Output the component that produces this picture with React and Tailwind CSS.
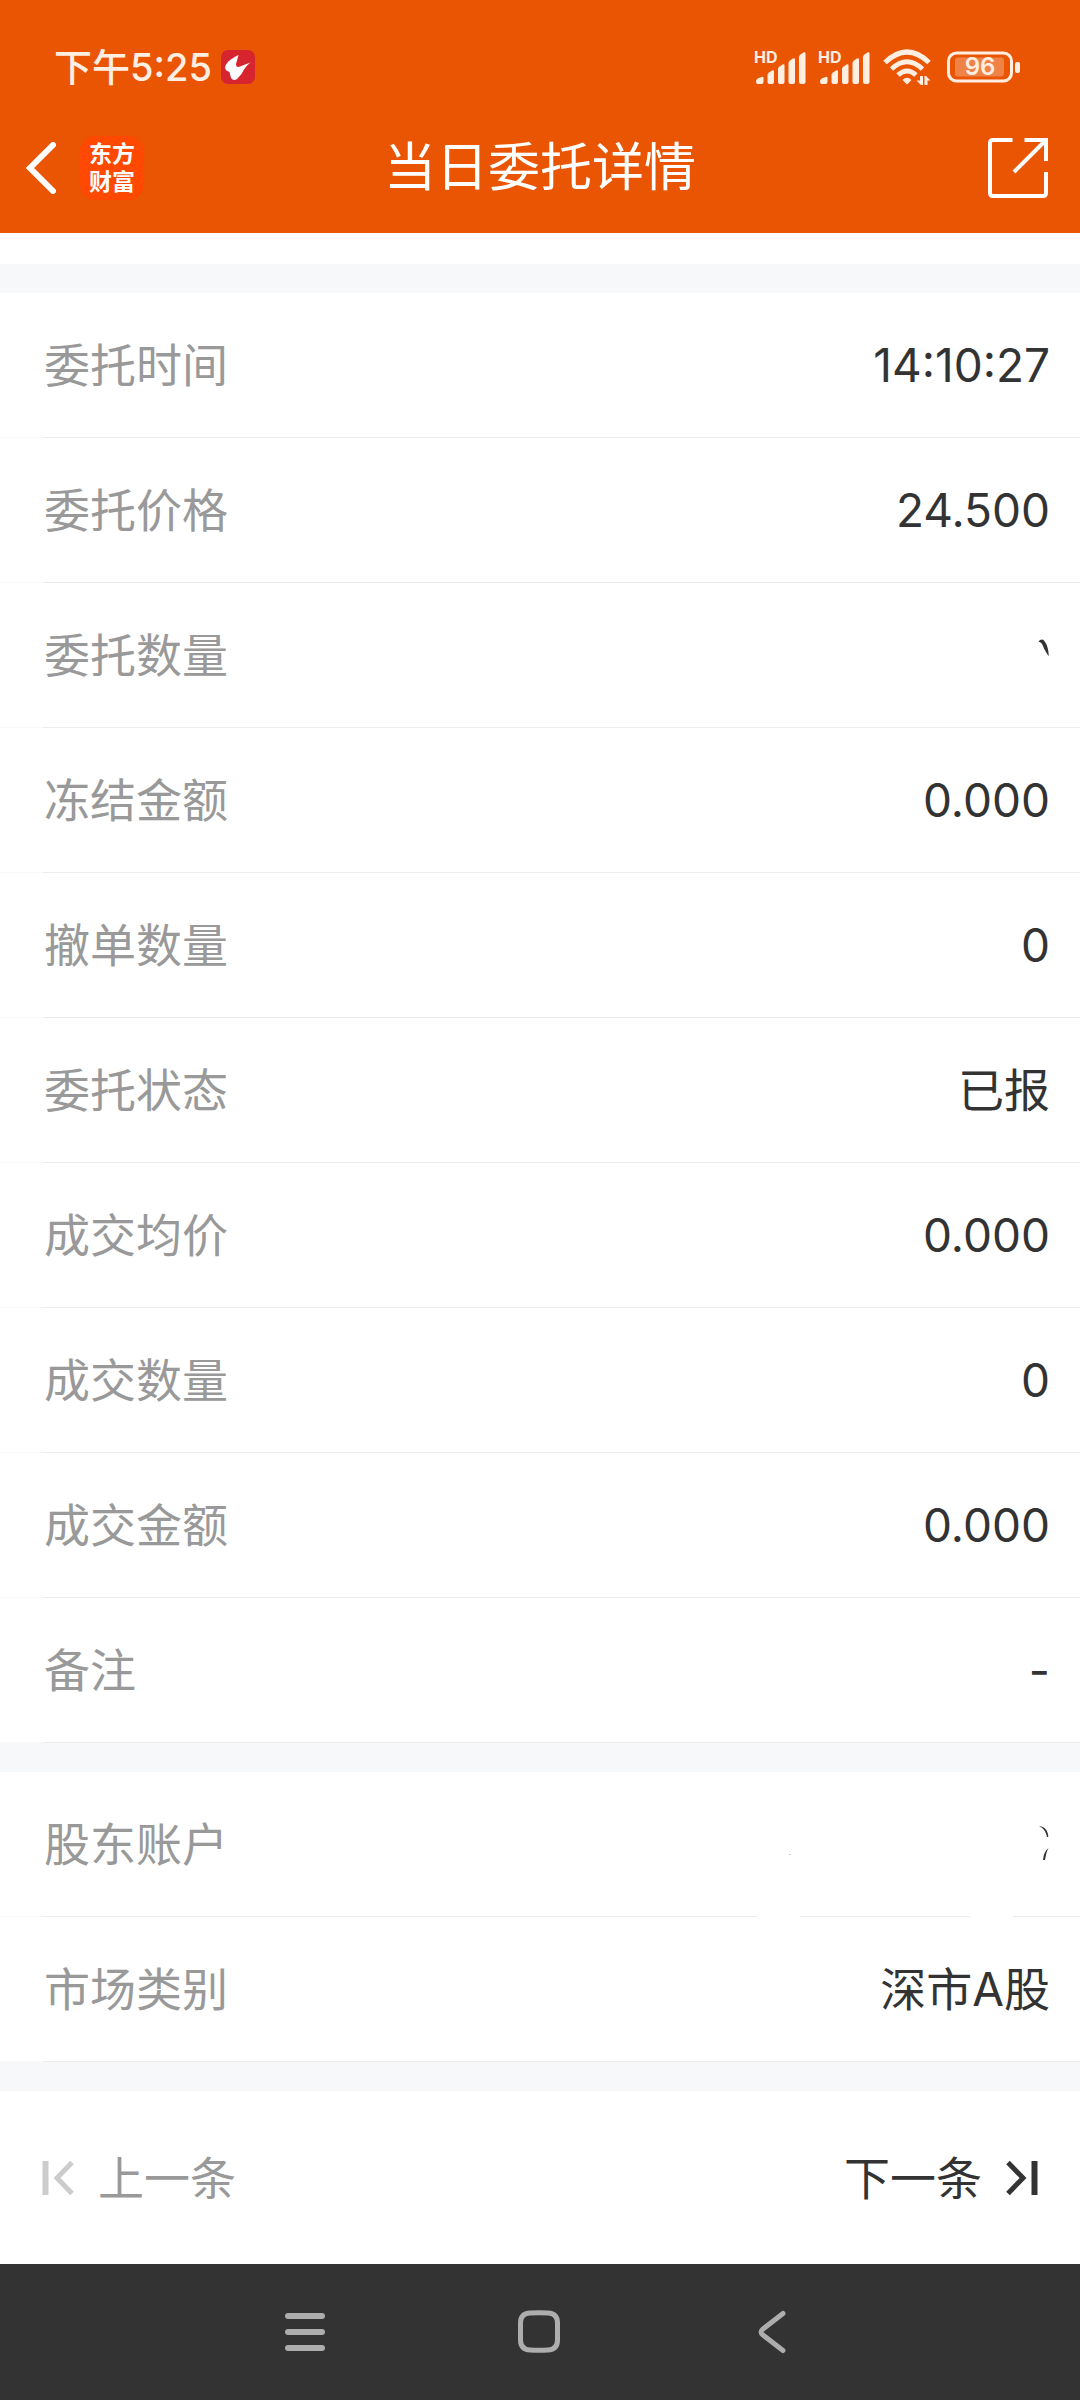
import clsx from 'clsx';

const orderRows = [
    { label: '委托时间', value: '14:10:27' },
    { label: '委托价格', value: '24.500' },
    { label: '委托数量', value: <MaskedAmount /> },
    { label: '冻结金额', value: '0.000' },
    { label: '撤单数量', value: '0' },
    { label: '委托状态', value: '已报' },
    { label: '成交均价', value: '0.000' },
    { label: '成交数量', value: '0' },
    { label: '成交金额', value: '0.000' },
    { label: '备注', value: '-' },
];

const accountRows = [
    { label: '股东账户', value: <MaskedAccount />, brokenLine: true },
    { label: '市场类别', value: '深市A股' },
];

// What is left of the value after it has been wiped out
function MaskedAmount() {
    return (
        <svg className="w-4 h-12" viewBox="0 0 16 48" fill="#333">
            <path d="M4.500 10.500L6 9Q8.500 7.800 10 9.500Q14.500 15 14.800 25Q13.500 24 10 17.500Q8 12 6.500 11.500Z" />
        </svg>
    );
}

function MaskedAccount() {
    return (
        <svg className="w-[264px] h-12" viewBox="0 0 264 48" fill="#333">
            <path d="M3 34h2v1h-2z" fill="#ccc" />
            <path d="M253 6C258 6.500 262.300 10 262.300 17H261C260 11.500 257 7.800 253 6Z" />
            <path d="M262.500 28C260.500 31 260 35 259 40H257C257.500 35 259 30.500 262.500 28Z" />
        </svg>
    );
}

function Divider({ broken }) {
    return (
        <div className="flex h-px">
            <div className="w-[43px] bg-[#f9f9f9]" />
            <div className="flex-1 bg-[#ececec]" />
            {broken && (
                <>
                    <div className="w-[43px]" />
                    <div className="w-[170px] bg-[#ececec]" />
                    <div className="w-[43px]" />
                    <div className="w-[67px] bg-[#ececec]" />
                </>
            )}
        </div>
    );
}

function DetailList({ rows }) {
    return (
        <dl className="bg-white">
            {rows.map((row) => (
                <div key={row.label}>
                    <div className="flex h-36 items-center justify-between pl-11 pr-[30px]">
                        <dt className="text-[#999]">{row.label}</dt>
                        <dd className="text-[#333]">{row.value}</dd>
                    </div>
                    <Divider broken={row.brokenLine} />
                </div>
            ))}
        </dl>
    );
}

const Band = () => <div className="h-[29px] bg-[#f6f8fa]" />;

function Signal() {
    return (
        <div className="relative h-9 w-[52px]">
            <span className="absolute left-0 top-0 text-base leading-4 font-bold">HD</span>
            <svg className="h-9 w-[52px]" viewBox="0 0 52 36" fill="currentColor">
                <path d="M2 32.500Q2 30 5 29L7.500 28Q9.500 27 9.500 29V33Q9.500 35 7.500 35H4Q2 35 2 32.500Z" />
                <path d="M13.500 26Q13.500 24.500 15 23.500L18 21.500Q20 20.500 20 22.500V33Q20 35 18 35H15.500Q13.500 35 13.500 33Z" />
                <path d="M24 20Q24 18.500 25.500 17.500L28.500 15.500Q30.500 14.500 30.500 16.500V33Q30.500 35 28.500 35H26Q24 35 24 33Z" />
                <path d="M34.500 14Q34.500 12.500 36 11.500L39 9.500Q41 8.500 41 10.500V33Q41 35 39 35H36.500Q34.500 35 34.500 33Z" />
                <path d="M45 8Q45 6.500 46.500 5.500L49.500 3.500Q51.500 2.500 51.500 4.500V33Q51.500 35 49.500 35H47Q45 35 45 33Z" />
            </svg>
        </div>
    );
}

function Wifi() {
    return (
        <svg className="h-9 w-[52px]" viewBox="0 0 52 36" fill="none" stroke="currentColor" strokeWidth="5">
            <path d="M3 13.500Q25 -7.500 47 13.500" />
            <path d="M9.500 20Q25 5.500 40.500 20" />
            <path d="M16 26Q25 18 34 26" />
            <path d="M20.500 31Q25 26.500 29.500 31L25 35.500Z" fill="currentColor" stroke="none" />
            <path d="M38 27H41V36H39L34.500 31.500H38ZM42.500 37V27H44L48.500 31.500H45.500V37Z" fill="currentColor" stroke="none" />
        </svg>
    );
}

function Battery() {
    return (
        <div className="relative h-8 w-[74px]">
            <svg className="h-8 w-[74px]" viewBox="0 0 74 32" fill="none">
                <rect x="2.500" y="2" width="63" height="28" rx="8" stroke="currentColor" strokeWidth="3" />
                <rect x="9" y="6.500" width="49" height="19" rx="3" fill="#fff" fillOpacity="0.270" />
                <rect x="69" y="11" width="5" height="11" rx="2" fill="currentColor" />
            </svg>
            <span className="absolute inset-y-0 left-0 w-[68px] text-center text-2xl leading-8 font-semibold">96</span>
        </div>
    );
}

function StatusBar() {
    return (
        <div className="flex h-[103px] items-center justify-between pt-[30px] pl-[54px] pr-[60px] text-[#ffeee2]">
            <div className="flex items-center gap-2">
                <span className="text-[38px] leading-[48px] font-medium">下午5:25</span>
                <svg className="size-9" viewBox="0 0 36 36">
                    <rect x="1" y="1" width="34" height="34" rx="7" fill="#d7252f" />
                    <path d="M18.500 6L16 15Q16 19 20 17.500L30.500 13.500Q25 17.500 21.500 25L17 30Q13.500 32.500 11 29L9.500 23Q3 21 6 15.500Q9 10.500 18.500 6Z" fill="#fff" />
                </svg>
            </div>
            <div className="flex items-center gap-3">
                <Signal />
                <Signal />
                <Wifi />
                <Battery />
            </div>
        </div>
    );
}

function TitleBar() {
    return (
        <div className="grid h-[130px] grid-cols-[1fr_auto_1fr] items-center text-white">
            <div className="flex items-center gap-6 pl-6">
                <button type="button" aria-label="返回">
                    <svg className="h-[52px] w-8" viewBox="0 0 32 52" fill="none" stroke="currentColor" strokeWidth="6" strokeLinecap="round">
                        <path d="M29 3L6 26L29 49" />
                    </svg>
                </button>
                <div className="size-16 rounded-2xl bg-[#ff4800] pt-1 text-center text-[23px] leading-7 font-bold">
                    <div>东方</div>
                    <div>财富</div>
                </div>
            </div>
            <h1 className="text-[52px] leading-16">当日委托详情</h1>
            <div className="flex justify-end pr-8">
                <button type="button" aria-label="分享">
                    <svg className="size-[60px]" viewBox="0 0 60 60" fill="none" stroke="currentColor" strokeWidth="4">
                        <path d="M24.500 2H5Q2 2 2 5V55Q2 58 5 58H55Q58 58 58 55V34" />
                        <path d="M36.500 2H58V23" />
                        <path d="M57 3L26 34" />
                    </svg>
                </button>
            </div>
        </div>
    );
}

function StepIcon({ flip, className }) {
    return (
        <svg className={clsx('h-9 w-9', flip && 'rotate-180', className)} viewBox="0 0 36 36" fill="none" stroke="currentColor" strokeWidth="5">
            <path d="M5.500 1V35" strokeWidth="6" />
            <path d="M32 2.500L17 18L32 33.500" />
        </svg>
    );
}

const App = () => {
    return (
        <div className="min-h-screen bg-white font-[Inter,'Noto_Sans_CJK_SC',sans-serif] text-[46px] leading-16">
            <header className="bg-[#ea5504]">
                <StatusBar />
                <TitleBar />
            </header>

            <main className="pt-[31px]">
                <Band />
                <DetailList rows={orderRows} />
                <Band />
                <DetailList rows={accountRows} />
                <Band />
                <div className="flex h-[173px] items-center justify-between px-10">
                    <button type="button" className="flex items-center gap-[22px] text-[#999]">
                        <StepIcon className="text-[#ccc]" />
                        上一条
                    </button>
                    <button type="button" className="flex items-center gap-[22px] text-[#333]">
                        下一条
                        <StepIcon flip />
                    </button>
                </div>
            </main>

            <nav className="flex h-[136px] items-center justify-center bg-[#333] text-[#adadad]">
                <button type="button" aria-label="菜单" className="flex w-[234px] justify-center">
                    <svg className="size-11" viewBox="0 0 44 44" stroke="currentColor" strokeWidth="6" strokeLinecap="round">
                        <path d="M4 6H38M4 22H38M4 38H38" />
                    </svg>
                </button>
                <button type="button" aria-label="主页" className="flex w-[234px] justify-center">
                    <svg className="size-11" viewBox="0 0 44 44" fill="none" stroke="currentColor" strokeWidth="5">
                        <path d="M2.500 13Q2.500 3.500 12 3Q21 2.500 30 3Q39.500 3.500 39.500 13V30Q39.500 39.500 30 40Q21 40.500 12 40Q2.500 39.500 2.500 30Z" />
                    </svg>
                </button>
                <button type="button" aria-label="后退" className="flex w-[234px] justify-center">
                    <svg className="size-11" viewBox="0 0 44 44" fill="none" stroke="currentColor" strokeWidth="5" strokeLinecap="round">
                        <path d="M31 3.500L11 19Q7 22 11 25L31 40.500" />
                    </svg>
                </button>
            </nav>
        </div>
    );
};

export default App;
